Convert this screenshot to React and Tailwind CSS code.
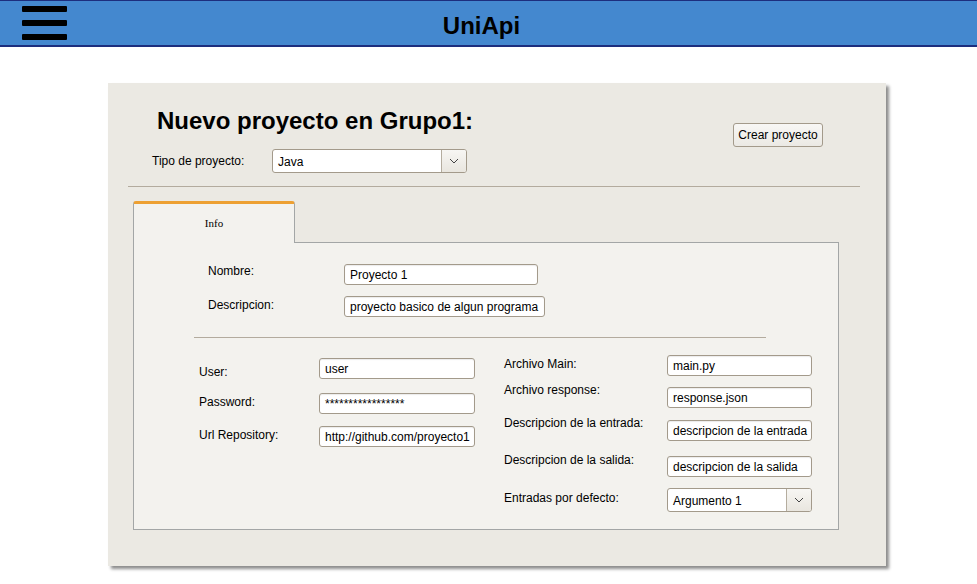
import React from "react";

function TextInput({ value, className = "" }) {
  return (
    <div
      className={`h-[21px] bg-white border border-[#a39a8b] rounded-[3px] pl-[5px] pt-[1px] text-[12px] leading-[19px] text-black shadow-[inset_0_1px_1px_rgba(0,0,0,0.08)] overflow-hidden whitespace-nowrap ${className}`}
    >
      {value}
    </div>
  );
}

function Chevron() {
  return (
    <svg width="10" height="6" viewBox="0 0 10 6" fill="none">
      <path d="M1 1 L5 5 L9 1" stroke="#444" strokeWidth="1" />
    </svg>
  );
}

function Select({ value, className = "" }) {
  return (
    <div
      className={`h-[24px] flex bg-white border border-[#a39a8b] rounded-[3px] overflow-hidden text-[12px] text-black ${className}`}
    >
      <div className="flex-1 pl-[5px] pt-[1px] leading-[22px] whitespace-nowrap">{value}</div>
      <div className="w-[25px] border-l border-[#b5ad9f] bg-gradient-to-b from-[#f7f6f3] to-[#e9e6df] flex items-center justify-center">
        <Chevron />
      </div>
    </div>
  );
}

function Label({ children, className = "" }) {
  return (
    <div className={`text-[12px] leading-[14px] text-black whitespace-nowrap ${className}`}>
      {children}
    </div>
  );
}

export default function App() {
  return (
    <div className="min-h-[584px] bg-white font-['Liberation_Sans',Arial,sans-serif] text-black">
      {/* Header */}
      <div className="h-[47px] bg-[#4488cf] border-t border-b-2 border-[#1d2e7e] flex items-start">
        <div className="ml-[22px] mt-[5px] flex flex-col gap-[8px]">
          <div className="w-[45px] h-[6px] bg-black rounded-[1px]" />
          <div className="w-[45px] h-[6px] bg-black rounded-[1px]" />
          <div className="w-[45px] h-[6px] bg-black rounded-[1px]" />
        </div>
        <div className="flex-1 mr-[81px] mt-[11px] text-center text-[24px] leading-[28px] font-bold">
          UniApi
        </div>
      </div>

      {/* Card */}
      <div className="mt-[36px] ml-[108px] w-[778px] bg-[#ebe9e3] shadow-[3px_3px_3px_rgba(0,0,0,0.45)] pt-[24px] pb-[36px]">
        <div className="flex justify-between items-start">
          <div>
            <h1 className="ml-[49px] text-[24px] leading-[28px] font-bold">
              Nuevo proyecto en Grupo1:
            </h1>
            <div className="mt-[14px] ml-[44px] flex items-center">
              <Label className="w-[120px]">Tipo de proyecto:</Label>
              <Select value="Java" className="w-[195px]" />
            </div>
          </div>
          <button className="mt-[16px] mr-[63px] w-[90px] h-[24px] border border-[#a39a8b] rounded-[3px] bg-gradient-to-b from-[#f8f7f5] to-[#ebe9e4] text-[12px] leading-[22px] text-black">
            Crear proyecto
          </button>
        </div>

        <div className="mt-[13px] ml-[20px] mr-[26px] h-px bg-[#b3ab9e]" />

        {/* Tabs */}
        <div className="mt-[14px] ml-[25px] mr-[47px]">
          <div className="flex h-[42px]">
            <div className="w-[162px] bg-[#f3f2ee] border-t-[3px] border-t-[#eda032] border-l border-r border-[#a3a6a6] rounded-t-[3px] flex items-center justify-center">
              <span className="font-['Liberation_Serif',serif] text-[11px] text-black">Info</span>
            </div>
            <div className="flex-1 border-b border-[#a3a6a6]" />
          </div>
          <div className="h-[287px] bg-[#f3f2ee] border-l border-r border-b border-[#a3a6a6] pt-[21px]">
            <div className="pl-[74px]">
              <div className="flex items-start">
                <Label className="w-[136px] mt-[0px]">Nombre:</Label>
                <TextInput value="Proyecto 1" className="w-[194px]" />
              </div>
              <div className="flex items-start mt-[11px]">
                <Label className="w-[136px] mt-[2px]">Descripcion:</Label>
                <TextInput value="proyecto basico de algun programa" className="w-[201px]" />
              </div>
            </div>

            <div className="mt-[20px] ml-[60px] w-[572px] h-px bg-[#b3ab9e]" />

            <div className="mt-[17px] ml-[65px] flex items-start">
              {/* Left column */}
              <div className="w-[305px]">
                <div className="flex items-start mt-[3px]">
                  <Label className="w-[120px] mt-[7px]">User:</Label>
                  <TextInput value="user" className="w-[156px]" />
                </div>
                <div className="flex items-start mt-[14px]">
                  <Label className="w-[120px] mt-[2px]">Password:</Label>
                  <TextInput value="*****************" className="w-[156px] text-[10px]" />
                </div>
                <div className="flex items-start mt-[12px]">
                  <Label className="w-[120px] mt-[2px]">Url Repository:</Label>
                  <TextInput value="http://github.com/proyecto1" className="w-[156px]" />
                </div>
              </div>

              {/* Right column */}
              <div>
                <div className="flex items-start">
                  <Label className="w-[163px] mt-[2px]">Archivo Main:</Label>
                  <TextInput value="main.py" className="w-[145px]" />
                </div>
                <div className="flex items-start mt-[7px]">
                  <Label className="w-[163px]">Archivo response:</Label>
                  <TextInput value="response.json" className="w-[145px] mt-[4px]" />
                </div>
                <div className="flex items-start mt-[8px]">
                  <Label className="w-[163px]">Descripcion de la entrada:</Label>
                  <TextInput value="descripcion de la entrada" className="w-[145px] mt-[4px]" />
                </div>
                <div className="flex items-start mt-[12px]">
                  <Label className="w-[163px]">Descripcion de la salida:</Label>
                  <TextInput value="descripcion de la salida" className="w-[145px] mt-[3px]" />
                </div>
                <div className="flex items-start mt-[11px]">
                  <Label className="w-[163px] mt-[3px]">Entradas por defecto:</Label>
                  <Select value="Argumento 1" className="w-[145px]" />
                </div>
              </div>
            </div>
          </div>
        </div>
      </div>
    </div>
  );
}
